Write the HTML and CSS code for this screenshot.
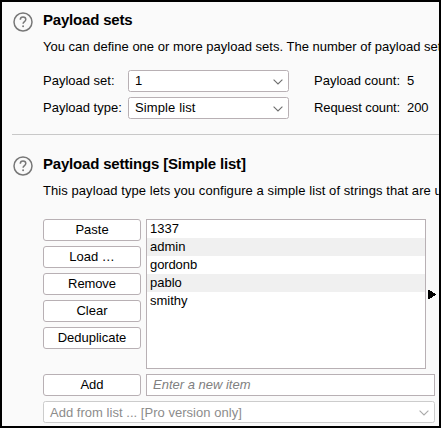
FILE: index.html
```html
<!DOCTYPE html>
<html lang="en">
<head>
<meta charset="utf-8">
<title>Payloads</title>
<link rel="stylesheet" href="styles.css">
</head>
<body>
<main class="window">
  <section class="section">
    <svg class="help" viewBox="0 0 20 20"><circle cx="10" cy="10" r="9"/><path d="M7.3 7.7C7.3 6 8.4 5.1 10 5.1s2.8 1 2.8 2.5c0 2-2.7 2-2.7 4.2"/><circle class="dot" cx="10.1" cy="14.3" r=".95"/></svg>
    <div class="body">
      <h2>Payload sets</h2>
      <p>You can define one or more payload sets. The number of payload set</p>
      <div class="fields">
        <span>Payload set:</span>
        <div class="select"><span class="loose">1</span><svg class="chevron" viewBox="0 0 10 6"><path d="M.6.6 5 5 9.4.6"/></svg></div>
        <span class="count">Payload count:</span><span>5</span>
        <span>Payload type:</span>
        <div class="select"><span class="loose">Simple list</span><svg class="chevron" viewBox="0 0 10 6"><path d="M.6.6 5 5 9.4.6"/></svg></div>
        <span class="count tight">Request count:</span><span class="tight">200</span>
      </div>
    </div>
  </section>
  <hr>
  <section class="section">
    <svg class="help" viewBox="0 0 20 20"><circle cx="10" cy="10" r="9"/><path d="M7.3 7.7C7.3 6 8.4 5.1 10 5.1s2.8 1 2.8 2.5c0 2-2.7 2-2.7 4.2"/><circle class="dot" cx="10.1" cy="14.3" r=".95"/></svg>
    <div class="body">
      <h2>Payload settings [Simple list]</h2>
      <p class="summary">This payload type lets you configure a simple list of strings that are u</p>
      <div class="editor">
        <div class="buttons">
          <button>Paste</button>
          <button>Load …</button>
          <button class="tight">Remove</button>
          <button>Clear</button>
          <button>Deduplicate</button>
        </div>
        <ul class="list">
          <li>1337</li>
          <li>admin</li>
          <li class="tight">gordonb</li>
          <li>pablo</li>
          <li>smithy</li>
        </ul>
        <svg class="marker" viewBox="0 0 8 9" shape-rendering="crispEdges"><path d="M0 0h2v1h2v1h1v1h2v1h1v1H7v1H5v1H4v1H2v1H0z"/></svg>
      </div>
      <div class="add">
        <button>Add</button>
        <div class="input">Enter a new item</div>
      </div>
      <div class="select disabled"><span>Add from list ... [Pro version only]</span><svg class="chevron" viewBox="0 0 10 6"><path d="M.6.6 5 5 9.4.6"/></svg></div>
    </div>
  </section>
</main>
</body>
</html>
```
FILE: styles.css
```css
* { box-sizing: border-box; }
body {
  margin: 0;
  overflow: hidden;
  font: 13px/15px "Liberation Sans", Arial, sans-serif;
  color: #000;
}
.window {
  width: 441px;
  height: 428px;
  border: 2px solid #000;
  padding: 8px 0 0 10px;
  background: #fafafa;
  overflow: hidden;
}
.section {
  display: grid;
  grid-template-columns: 31px minmax(0, 1fr);
}
.help {
  width: 20px;
  height: 20px;
  margin: 1.5px 0 0 .5px;
  fill: none;
  stroke: #777;
  stroke-width: 1.5;
}
.help .dot { fill: #777; stroke: none; }
h2 {
  margin: 0 0 9px;
  font-size: 15px;
  line-height: 20px;
  letter-spacing: -.19px;
}
p {
  margin: 0;
  white-space: nowrap;
  letter-spacing: .015px;
}
.summary { letter-spacing: .07px; }
.tight { letter-spacing: -.1px; }
.loose { letter-spacing: .12px; }
.fields {
  display: grid;
  grid-template-columns: 85px 161px 118px 1fr;
  row-gap: 5px;
  margin-top: 16px;
  line-height: 22px;
  white-space: nowrap;
}
.count { padding-left: 25px; }
.select {
  display: flex;
  align-items: center;
  justify-content: space-between;
  height: 22px;
  padding: 0 5px 0 6px;
  border: 1px solid #b8b0b4;
  border-radius: 2.5px;
  background: #fff;
}
.chevron {
  width: 10px;
  height: 6px;
  margin-top: 1px;
  fill: none;
  stroke: #6e6e6e;
  stroke-width: 1.1;
}
hr {
  height: 1px;
  margin: 15px 0 19px;
  border: 0;
  background: #c8c8c8;
}
.editor {
  display: grid;
  grid-template-columns: 98px 280px 8px;
  column-gap: 5px;
  height: 150px;
  margin-top: 21px;
}
.buttons {
  display: flex;
  flex-direction: column;
  gap: 5px;
}
button {
  width: 98px;
  height: 22px;
  padding: 0 0 1px;
  border: 1px solid #b8b0b4;
  border-radius: 3px;
  background: #fff;
  font: inherit;
  line-height: 18px;
  color: inherit;
}
.list {
  margin: 0;
  padding: 0;
  border: 1px solid #b8b0b4;
  background: #fff;
  list-style: none;
}
.list li {
  height: 18px;
  padding-left: 3px;
  line-height: 17px;
}
.list li:nth-child(even) { background: #f0f0f0; }
.marker {
  width: 8px;
  height: 9px;
  margin: 71px 0 0 -3px;
}
.add {
  display: flex;
  gap: 5px;
  margin: 5px 0;
}
.input {
  width: 289px;
  height: 22px;
  padding-left: 6px;
  border: 1px solid #b8b0b4;
  background: #fff;
  color: #808080;
  font-style: italic;
  line-height: 20px;
}
.disabled {
  width: 392px;
  border-color: #ccc;
  color: #8c8c8c;
  line-height: 15px;
  letter-spacing: .03px;
}
.disabled .chevron { stroke: #aaa; }
```
